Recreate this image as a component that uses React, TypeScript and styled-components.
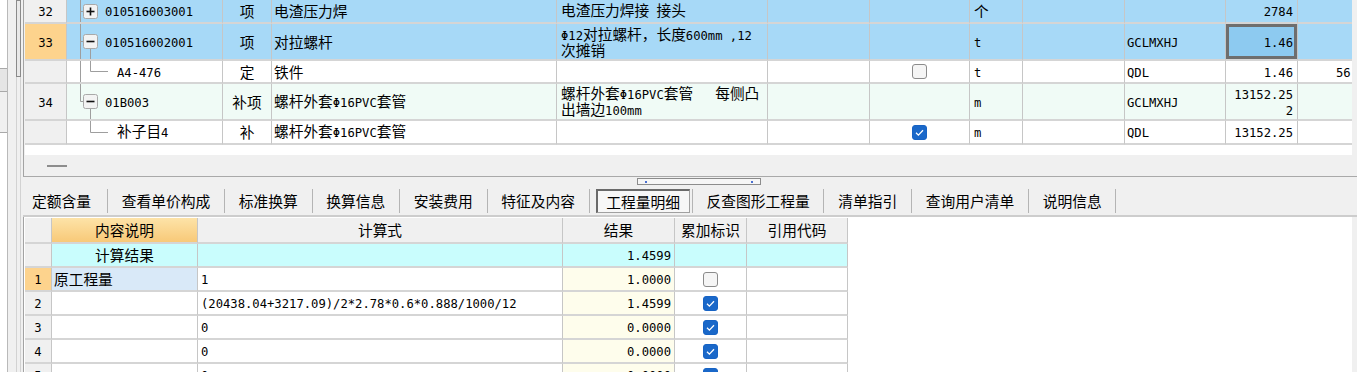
import React from "react";
import styled, { createGlobalStyle } from "styled-components";

const CJK = `"Noto Sans CJK SC", "Noto Sans", sans-serif`;
const MONO = `"DejaVu Sans Mono", "Liberation Mono", monospace`;

const BLUE = "#a7d9f7";
const MINT = "#f0fbf6";
const ORANGE = "#fdd38d";
const HEAD = "#f0f0f0";
const CYAN = "#c9fdfd";
const CREAM = "#fefdec";
const PALE = "#d9e9f8";

const TOP_COLS = "42px 156px 49px 285px 211px 102px 100px 53px 102px 101px 72px 80px";
const BOTTOM_COLS = "27px 146px 365px 112px 72px 101px";

const GlobalStyle = createGlobalStyle`
  html, body { margin: 0; padding: 0; background: #f0f0f0; }
  body { font-family: ${CJK}; color: #000; }
`;

const Page = styled.div`
  display: flex;
  width: 1357px;
  height: 372px;
  overflow: hidden;
  background: #f0f0f0;
`;

/* left dock + scroll strip */
const LeftStrip = styled.div`
  display: flex;
  width: 23px;
  flex-shrink: 0;
`;

const Dock = styled.div`
  display: flex;
  flex-direction: column;
  width: 7px;
  border-right: 1px solid #b9b9b9;
`;

const DockBlock = styled.div<{ $h?: number; $bg: string; $line?: boolean }>`
  height: ${(p) => (p.$h ? `${p.$h}px` : "auto")};
  flex: ${(p) => (p.$h ? "none" : 1)};
  background: ${(p) => p.$bg};
  border-top: ${(p) => (p.$line ? "1px solid #a9a9a9" : "none")};
`;

const ScrollTrack = styled.div`
  width: 5px;
  margin-left: 8px;
  box-sizing: border-box;
  border-left: 1px solid #d2d2d2;
  border-right: 1px solid #d2d2d2;
`;

const ScrollThumb = styled.div`
  height: 75px;
  margin: 0 -1px;
  border: 1px solid #8a8a8a;
  background: #e9e9e9;
`;

/* main column */
const Main = styled.div`
  display: flex;
  flex-direction: column;
  flex: 1;
  min-width: 0;
  height: 372px;
  overflow: hidden;
`;

const TopPane = styled.div`
  display: flex;
  flex-direction: column;
  flex-shrink: 0;
  height: 177px;
  box-sizing: border-box;
  border-left: 1px solid #a3a3a3;
  border-bottom: 1px solid #a9a9a9;
`;

const GridBox = styled.div`
  flex-shrink: 0;
  margin-left: 1px;
  width: 1327px;
  height: 155px;
  background: #fff;
  overflow: hidden;
`;

const HScrollStub = styled.div`
  flex: 1;
  display: flex;
  align-items: center;
  padding-left: 23px;
`;

const Dash = styled.span`
  width: 20px;
  height: 2px;
  background: #8d8d8d;
`;

const SplitRow = styled.div`
  display: flex;
  align-items: center;
  flex-shrink: 0;
  height: 9px;
  padding-left: 614px;
`;

const SplitHandle = styled.div`
  display: flex;
  align-items: center;
  justify-content: space-between;
  width: 124px;
  height: 7px;
  box-sizing: border-box;
  padding: 0 7px;
  border: 1px solid #8c8c8c;
  background: #f6f6f6;
`;

const SplitDot = styled.span`
  width: 2px;
  height: 2px;
  background: #4a6fd0;
`;

const TabBar = styled.div`
  display: flex;
  align-items: center;
  flex-shrink: 0;
  height: 29px;
  border-bottom: 2px solid #cdcdcd;
`;

const Tab = styled.div<{ $active?: boolean }>`
  display: flex;
  align-items: center;
  height: 24px;
  padding: ${(p) => (p.$active ? "0 2px 0 6px" : "0 13.75px")};
  border-right: 1px solid #b4b4b4;
  font-family: ${CJK};
  font-size: 14.75px;
  white-space: nowrap;
  &:first-child {
    padding-left: 9px;
    padding-right: 16px;
  }
`;

const ActiveFrame = styled.span`
  display: flex;
  align-items: center;
  height: 24px;
  box-sizing: border-box;
  padding: 0 8.6px;
  border: 1px solid #a0a0a0;
  border-top: 2px solid #6a6a6a;
  border-left: 2px solid #6a6a6a;
  background: #f7f7f7;
`;

const BottomPane = styled.div`
  display: flex;
  flex: 1;
  min-height: 0;
  overflow: hidden;
  border-left: 1px solid #a3a3a3;
`;

const BottomContent = styled.div`
  width: 1328px;
  box-sizing: border-box;
  padding: 1px 0 0 1px;
  background: #fff;
`;

/* grid parts */
const GridRow = styled.div<{ $cols: string; $h: number; $bg?: string }>`
  display: grid;
  grid-template-columns: ${(p) => p.$cols};
  height: ${(p) => p.$h}px;
  background: ${(p) => p.$bg || "#fff"};
`;

const Cell = styled.div<{
  $bg?: string;
  $align?: "left" | "center" | "right";
  $pl?: number;
  $pr?: number;
  $focus?: boolean;
}>`
  display: flex;
  align-items: center;
  justify-content: ${(p) =>
    p.$align === "center" ? "center" : p.$align === "right" ? "flex-end" : "flex-start"};
  text-align: ${(p) => p.$align || "left"};
  min-width: 0;
  box-sizing: border-box;
  padding-left: ${(p) => (p.$pl ?? 3)}px;
  padding-right: ${(p) => (p.$pr ?? 0)}px;
  background: ${(p) => p.$bg || "transparent"};
  border-right: 1px solid #c6c6c6;
  border-bottom: 2px solid #d5d5d5;
  box-shadow: ${(p) => (p.$focus ? "inset 0 0 0 3px #6e6e6e" : "none")};
  overflow: hidden;
  font-family: ${CJK};
  font-size: 14.7px;
  color: #000;
`;

const HeadCell = styled(Cell)<{ $warm?: boolean }>`
  background: ${(p) => (p.$warm ? "linear-gradient(#fde3a8, #f8c978)" : HEAD)};
`;

const Txt = styled.span`
  display: block;
  line-height: 14px;
  white-space: pre;
`;

const Ascii = styled.span`
  font-family: ${MONO};
  font-size: 12.2px;
`;

const TreeSvg = styled.svg`
  display: block;
  flex-shrink: 0;
`;

const Check = styled.span<{ $on: boolean }>`
  display: inline-flex;
  align-items: center;
  justify-content: center;
  width: 15px;
  height: 15px;
  box-sizing: border-box;
  border-radius: 3px;
  border: 1px solid ${(p) => (p.$on ? "#1763c4" : "#8b8b8b")};
  background: ${(p) => (p.$on ? "#1a68c9" : "#f5f5f5")};
`;

const Mixed = ({ text }: { text: string }) => {
  const parts = text.match(/[\x20-\x7eΦ]+|[^\x20-\x7eΦ]+/g) || [];
  return (
    <>
      {parts.map((p, i) =>
        /[\x20-\x7eΦ]/.test(p[0]) ? <Ascii key={i}>{p}</Ascii> : <span key={i}>{p}</span>
      )}
    </>
  );
};

const Lines = ({ lines }: { lines: string[] }) => (
  <Txt>
    {lines.map((l, i) => (
      <React.Fragment key={i}>
        {i > 0 && <br />}
        <Mixed text={l} />
      </React.Fragment>
    ))}
  </Txt>
);

const CheckBox = ({ on }: { on: boolean }) => (
  <Check $on={on}>
    {on && (
      <svg width="13" height="13" viewBox="0 0 13 13">
        <path d="M3 6.8 L5.4 9.1 L10 4.3" stroke="#fff" strokeWidth="1.3" fill="none" />
      </svg>
    )}
  </Check>
);

type TreeProps = { outer?: "full" | "top"; box?: "+" | "-"; child?: "down" | "end" };

const TreeLines = ({ h, outer, box, child }: TreeProps & { h: number }) => {
  const w = child === "end" ? 50 : 38;
  const m = Math.floor(h / 2);
  const y = m + 0.5;
  const stroke = "#9e9e9e";
  return (
    <TreeSvg width={w} height={h}>
      {outer && <line x1={13.5} y1={0} x2={13.5} y2={outer === "full" ? h : y} stroke={stroke} />}
      {box && (
        <>
          <line x1={13.5} y1={y} x2={16.5} y2={y} stroke={stroke} />
          <rect x={16.5} y={m - 6.5} width={14} height={14} rx={2} fill="#f3f3f3" stroke="#a9a9a9" />
          <rect x={19.5} y={m - 0.3} width={8} height={1.6} fill="#111" />
          {box === "+" && <rect x={22.7} y={m - 3.5} width={1.6} height={8} fill="#111" />}
        </>
      )}
      {child === "down" && <line x1={23.5} y1={m + 8} x2={23.5} y2={h} stroke={stroke} />}
      {child === "end" && (
        <>
          <line x1={23.5} y1={0} x2={23.5} y2={y} stroke={stroke} />
          <line x1={23.5} y1={y} x2={41} y2={y} stroke={stroke} />
        </>
      )}
    </TreeSvg>
  );
};

type TopRow = {
  num: string;
  numBg?: string;
  bg: string;
  h: number;
  tree: TreeProps;
  code: string;
  kind: string;
  name: string;
  feature: string[];
  check?: boolean;
  unit: string;
  src: string;
  qty: string[];
  focus?: boolean;
  extra?: string;
};

const TOP_ROWS: TopRow[] = [
  {
    num: "32", bg: BLUE, h: 24, tree: { outer: "full", box: "+" }, code: "010516003001",
    kind: "项", name: "电渣压力焊", feature: ["电渣压力焊接 接头"], unit: "个", src: "", qty: ["2784"],
  },
  {
    num: "33", numBg: ORANGE, bg: BLUE, h: 37, tree: { outer: "full", box: "-", child: "down" },
    code: "010516002001", kind: "项", name: "对拉螺杆",
    feature: ["Φ12对拉螺杆，长度600mm ,12", "次摊销"], unit: "t", src: "GCLMXHJ", qty: ["1.46"], focus: true,
  },
  {
    num: "", bg: "#fff", h: 23, tree: { outer: "full", child: "end" }, code: "A4-476",
    kind: "定", name: "铁件", feature: [], check: false, unit: "t", src: "QDL", qty: ["1.46"], extra: "56",
  },
  {
    num: "34", bg: MINT, h: 37, tree: { outer: "top", box: "-", child: "down" }, code: "01B003",
    kind: "补项", name: "螺杆外套Φ16PVC套管", feature: ["螺杆外套Φ16PVC套管   每侧凸", "出墙边100mm"],
    unit: "m", src: "GCLMXHJ", qty: ["13152.25", "2"],
  },
  {
    num: "", bg: "#fff", h: 24, tree: { child: "end" }, code: "补子目4", kind: "补",
    name: "螺杆外套Φ16PVC套管", feature: [], check: true, unit: "m", src: "QDL", qty: ["13152.25"],
  },
];

const TopGrid = () => (
  <GridBox>
    {TOP_ROWS.map((r, i) => (
      <GridRow key={i} $cols={TOP_COLS} $h={r.h} $bg={r.bg}>
        <Cell $bg={r.numBg || HEAD} $align="center" $pl={0}>
          <Lines lines={[r.num]} />
        </Cell>
        <Cell $pl={0}>
          <TreeLines h={r.h - 2} {...r.tree} />
          <Lines lines={[r.code]} />
        </Cell>
        <Cell $align="center" $pl={0}>
          <Lines lines={[r.kind]} />
        </Cell>
        <Cell $pl={2}>
          <Lines lines={[r.name]} />
        </Cell>
        <Cell $pl={4}>
          <Lines lines={r.feature} />
        </Cell>
        <Cell />
        <Cell $align="center" $pl={0}>
          {r.check !== undefined && <CheckBox on={r.check} />}
        </Cell>
        <Cell $pl={4}>
          <Lines lines={[r.unit]} />
        </Cell>
        <Cell />
        <Cell $pl={2}>
          <Lines lines={[r.src]} />
        </Cell>
        <Cell $align="right" $pr={4} $pl={0} $bg={r.focus ? "#8dcaf0" : undefined} $focus={r.focus}>
          <Lines lines={r.qty} />
        </Cell>
        <Cell $pl={38}>
          <Lines lines={[r.extra || ""]} />
        </Cell>
      </GridRow>
    ))}
  </GridBox>
);

const TABS = [
  "定额含量",
  "查看单价构成",
  "标准换算",
  "换算信息",
  "安装费用",
  "特征及内容",
  "工程量明细",
  "反查图形工程量",
  "清单指引",
  "查询用户清单",
  "说明信息",
];

type DetailRow = {
  num: string;
  numBg?: string;
  bg?: string;
  desc: string;
  descBg?: string;
  descCenter?: boolean;
  formula: string;
  result: string;
  resultBg?: string;
  check?: boolean;
};

const DETAIL_ROWS: DetailRow[] = [
  { num: "", bg: CYAN, desc: "计算结果", descCenter: true, formula: "", result: "1.4599" },
  { num: "1", numBg: ORANGE, desc: "原工程量", descBg: PALE, formula: "1", result: "1.0000", resultBg: CREAM, check: false },
  { num: "2", desc: "", formula: "(20438.04+3217.09)/2*2.78*0.6*0.888/1000/12", result: "1.4599", resultBg: CREAM, check: true },
  { num: "3", desc: "", formula: "0", result: "0.0000", resultBg: CREAM, check: true },
  { num: "4", desc: "", formula: "0", result: "0.0000", resultBg: CREAM, check: true },
  { num: "5", desc: "", formula: "0", result: "0.0000", resultBg: CREAM, check: true },
];

const DetailTable = () => (
  <div>
    <GridRow $cols={BOTTOM_COLS} $h={26}>
      <HeadCell />
      <HeadCell $warm $align="center" $pl={0}>
        <Txt>内容说明</Txt>
      </HeadCell>
      <HeadCell $align="center" $pl={0}>
        <Txt>计算式</Txt>
      </HeadCell>
      <HeadCell $align="center" $pl={0}>
        <Txt>结果</Txt>
      </HeadCell>
      <HeadCell $align="center" $pl={0}>
        <Txt>累加标识</Txt>
      </HeadCell>
      <HeadCell $align="center" $pl={0}>
        <Txt>引用代码</Txt>
      </HeadCell>
    </GridRow>
    {DETAIL_ROWS.map((r, i) => (
      <GridRow key={i} $cols={BOTTOM_COLS} $h={24} $bg={r.bg}>
        <Cell $bg={r.numBg || HEAD} $align="center" $pl={0}>
          <Lines lines={[r.num]} />
        </Cell>
        <Cell $bg={r.descBg} $align={r.descCenter ? "center" : "left"} $pl={r.descCenter ? 0 : 2}>
          <Lines lines={[r.desc]} />
        </Cell>
        <Cell $pl={3}>
          <Lines lines={[r.formula]} />
        </Cell>
        <Cell $bg={r.resultBg} $align="right" $pl={0} $pr={3}>
          <Lines lines={[r.result]} />
        </Cell>
        <Cell $align="center" $pl={0}>
          {r.check !== undefined && <CheckBox on={r.check} />}
        </Cell>
        <Cell />
      </GridRow>
    ))}
  </div>
);

const DetailWrap = styled.div`
  width: 823px;
`;

export default function App() {
  return (
    <>
      <GlobalStyle />
      <Page>
        <LeftStrip>
          <Dock>
            <DockBlock $h={68} $bg="#fff" />
            <DockBlock $h={22} $bg="#e5e5e5" $line />
            <DockBlock $h={40} $bg="#f0f0f0" $line />
            <DockBlock $bg="#fff" $line />
          </Dock>
          <ScrollTrack>
            <ScrollThumb />
          </ScrollTrack>
        </LeftStrip>
        <Main>
          <TopPane>
            <TopGrid />
            <HScrollStub>
              <Dash />
            </HScrollStub>
          </TopPane>
          <SplitRow>
            <SplitHandle>
              <SplitDot />
              <SplitDot />
            </SplitHandle>
          </SplitRow>
          <TabBar>
            {TABS.map((t) =>
              t === "工程量明细" ? (
                <Tab key={t} $active>
                  <ActiveFrame>{t}</ActiveFrame>
                </Tab>
              ) : (
                <Tab key={t}>{t}</Tab>
              )
            )}
          </TabBar>
          <BottomPane>
            <BottomContent>
              <DetailWrap>
                <DetailTable />
              </DetailWrap>
            </BottomContent>
          </BottomPane>
        </Main>
      </Page>
    </>
  );
}
